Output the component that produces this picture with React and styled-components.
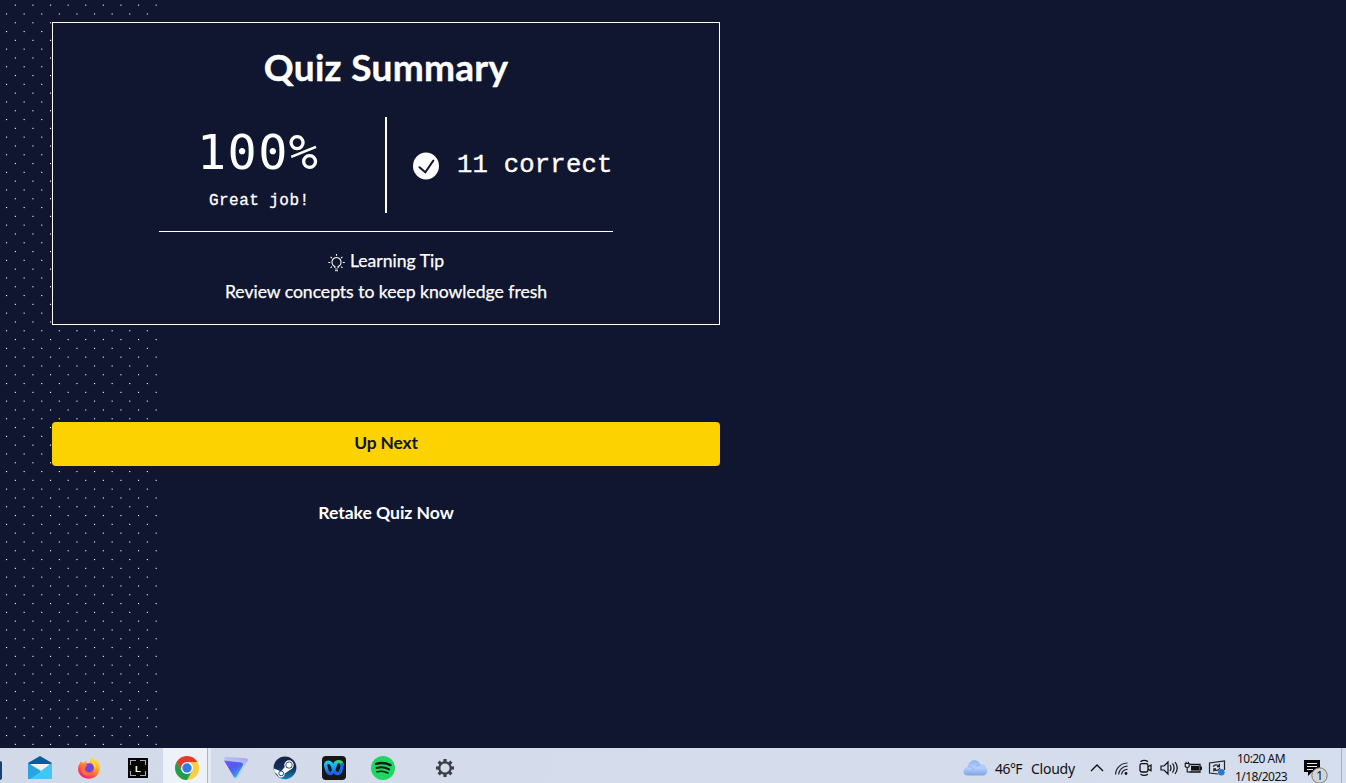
import React from "react";
import styled, { createGlobalStyle } from "styled-components";

const GlobalStyle = createGlobalStyle`
  * { box-sizing: border-box; }
  html, body { margin: 0; padding: 0; overflow: hidden; }
  body { background: #10162f; }
`;

const Screen = styled.div`
  display: flex;
  flex-direction: column;
  width: 100%;
  height: 100vh;
  background: #10162f;
  color: #fff;
  font-family: Lato, "Open Sans", sans-serif;
`;

const Page = styled.main`
  position: relative;
  flex: 1;
  min-height: 0;
  padding: 22px 0 0 52px;
`;

const DotField = styled.svg`
  position: absolute;
  left: 0;
  top: 0;
  width: 160px;
  height: 100%;
`;

const Column = styled.div`
  position: relative;
  display: flex;
  flex-direction: column;
  width: 668px;
`;

const Card = styled.section`
  display: flex;
  flex-direction: column;
  align-items: center;
  height: 303px;
  border: 1px solid #fff;
  background: #10162f;
`;

const Title = styled.h1`
  margin: 20px 0 0;
  height: 50px;
  font-size: 37px;
  line-height: 48px;
  font-weight: 700;
  letter-spacing: 0.3px;
  white-space: nowrap;
  -webkit-text-stroke: 0.4px #fff;
`;

const Results = styled.div`
  display: flex;
  width: 454px;
  height: 115px;
  margin-top: 24px;
  padding-bottom: 18px;
  border-bottom: 1px solid #fff;
  font-family: "Liberation Mono", monospace;
`;

const Score = styled.div`
  display: flex;
  flex-direction: column;
  width: 228px;
  padding-left: 38px;
  border-right: 2px solid #fff;
`;

const Percent = styled.div`
  height: 73px;
  font-family: "DejaVu Sans Mono", monospace;
  font-size: 48.5px;
  line-height: 70px;
  letter-spacing: 1.4px;
`;

const Praise = styled.div`
  padding-left: 12px;
  font-size: 16px;
  line-height: 24px;
  letter-spacing: 0.45px;
  white-space: nowrap;
  -webkit-text-stroke: 0.3px #fff;
`;

const Correct = styled.div`
  display: flex;
  align-items: center;
  gap: 18px;
  padding: 1px 0 0 26px;
  font-size: 25.6px;
  letter-spacing: 0.2px;
  white-space: nowrap;
  -webkit-text-stroke: 0.4px #fff;
  svg { flex: none; }
`;

const TipHeading = styled.div`
  display: flex;
  align-items: center;
  gap: 5px;
  height: 30px;
  margin-top: 14px;
  font-size: 17.6px;
  -webkit-text-stroke: 0.25px #fff;
  svg { margin-top: 3px; }
  span { margin-top: -1px; }
`;

const TipText = styled.p`
  margin: 0;
  font-size: 17.6px;
  line-height: 32px;
  letter-spacing: -0.03px;
  white-space: nowrap;
  -webkit-text-stroke: 0.25px #fff;
`;

const PrimaryButton = styled.button`
  height: 44px;
  margin-top: 97px;
  padding: 0 0 3px;
  border: 0;
  border-radius: 4px;
  background: #fcd200;
  color: #10162f;
  font: 700 17.4px Lato, sans-serif;
  letter-spacing: -0.15px;
`;

const TextButton = styled.button`
  align-self: center;
  height: 44px;
  margin-top: 24px;
  padding: 0;
  border: 0;
  background: transparent;
  color: #fff;
  font: 700 17.6px Lato, sans-serif;
  letter-spacing: -0.05px;
  white-space: nowrap;
`;

const Taskbar = styled.footer`
  display: flex;
  flex: none;
  height: 35px;
  background: linear-gradient(90deg, #d2d9e8, #d5dcec 50%, #d5deee);
  color: #111;
  font-family: "Noto Sans", "Open Sans", sans-serif;
`;

const HiddenApp = styled.div`
  width: 2px;
  height: 19px;
  margin: 13px 13px 0 0;
  border-radius: 0 2px 2px 0;
  background: #164273;
`;

const AppSlot = styled.div`
  display: flex;
  justify-content: center;
  width: ${(p) => p.$width || 49}px;
  padding-top: ${(p) => p.$top || 8}px;
  svg { display: block; }
`;

const ActiveApp = styled(AppSlot)`
  width: 45px;
  margin-left: 1px;
  background: #edf1f8;
  border-right: 1px solid #aeb5c2;
  padding-left: 3px;
`;

const StackedEdge = styled.div`
  width: 3px;
  background: #e3e8f1;
`;

const Tray = styled.div`
  display: flex;
  align-items: flex-start;
  margin-left: auto;
  svg { display: block; flex: none; }
`;

const Weather = styled.div`
  display: flex;
  width: 122px;
  padding-top: 10px;
  font-size: 14px;
  line-height: 21px;
  white-space: nowrap;
  svg { margin: 1px 7px 0 0; }
`;

const Temperature = styled.span`
  width: 36px;
  letter-spacing: -0.55px;
`;

const Condition = styled.span`
  letter-spacing: -0.25px;
`;

const TrayIcon = styled.div`
  display: flex;
  justify-content: center;
  width: 24px;
  padding-top: 10px;
`;

const Clock = styled.div`
  width: 66px;
  padding: 2px 2px 0 0;
  font-size: 12px;
  line-height: 18px;
  letter-spacing: -0.55px;
  text-align: center;
  white-space: nowrap;
`;

const Notifications = styled.div`
  width: 46px;
  padding: 10px 0 0 9px;
`;

const DesktopEdge = styled.div`
  width: 5px;
  height: 35px;
  border-left: 1px solid #a9b1bf;
`;

const Dots = () => (
  <DotField aria-hidden="true">
    {Array.from({ length: 86 }, (_, row) =>
      Array.from({ length: 9 }, (_, col) => (
        <rect
          key={`${row}-${col}`}
          x={(row % 2 ? 6 : 14.8) + col * 17.6}
          y={4.6 + row * 8.8}
          width="1.1"
          height="1.1"
          fill="#fff"
        />
      ))
    )}
  </DotField>
);

const CheckIcon = () => (
  <svg width="26" height="28" viewBox="0 0 26 28">
    <ellipse cx="13" cy="14" rx="13" ry="13.5" fill="#fff" />
    <path d="M6.5 15.2l5.8 5L20.3 8.6" fill="none" stroke="#10162f" strokeWidth="2" strokeLinecap="round" />
  </svg>
);

const BulbIcon = () => (
  <svg width="17" height="18" viewBox="0 0 17 18" fill="none" stroke="#fff" strokeWidth="1.1">
    <path d="M6.9 14v-1.6a4.6 4.6 0 1 1 3.2 0V14" />
    <path d="M7 15h3M7 16.6h3" opacity=".75" />
    <path d="M8.5 0v1.8M0.3 8.5h2M14.8 8.5h2M2.6 2.8l1.3 1.3M14.4 2.8l-1.3 1.3M2.6 13.9l1.3-1.2M14.4 13.9l-1.3-1.2" />
  </svg>
);

const MailIcon = () => (
  <svg width="24" height="24" viewBox="0 0 24 24">
    <path d="M0 7L12 0 24 7v5H0z" fill="#0b5c9f" />
    <path d="M2.5 8h19v8h-19z" fill="#f3f3f3" />
    <path d="M0 7l24 14V7L12 15.5z" fill="#39bff1" />
    <path d="M0 7v16h24z" fill="#29a4e2" />
    <path d="M24 7v16H2L14 15z" fill="#43c6f3" />
  </svg>
);

const FirefoxIcon = () => (
  <svg width="24" height="24" viewBox="0 0 24 24">
    <defs>
      <linearGradient id="fox" x1="0.8" y1="0" x2="0.2" y2="1">
        <stop offset="0" stopColor="#fff14a" />
        <stop offset=".45" stopColor="#ff9a22" />
        <stop offset=".75" stopColor="#ff4650" />
        <stop offset="1" stopColor="#e9198b" />
      </linearGradient>
    </defs>
    <path d="M3.3 6.8l.6-1.7 1.5 1.7 1.8-.2 2.2-2 .4 2.5 2.7.2.5-2.8L16 0l1.1 4 1.3 1 .2-2c2.8 2.4 4.6 6 4.2 10-.5 5.6-5.3 9.8-10.9 9.8C6 22.8 1 18.5 1 13c0-2.3.6-4.4 2.3-6.2z" fill="url(#fox)" />
    <circle cx="12.3" cy="11.8" r="4.6" fill="#7444d8" />
    <path d="M4.5 9c2-.7 3.7-.8 6.1.3l-1.8 1.5-1.4 2.4c.8 3.9 5.4 5.3 9.4 3.1-2 4.4-9.2 4.8-12-.3z" fill="#ff7139" />
    <path d="M13 5c3 2 4.6 4.4 4.5 8.3 2-2.2 1-6-.5-8.3l-2-3z" fill="#ffd83b" />
  </svg>
);

const LIcon = () => (
  <svg width="20" height="20" viewBox="0 0 20 20">
    <path fill="#050505" d="M0 0h20v20H0z" />
    <path d="M2.5 7V2.5H8M12 2.5h5.5V7M2.5 13v4.5H8M12 17.5h5.5V13" fill="none" stroke="#aaa" strokeWidth="1.1" />
    <text x="7.1" y="13.6" fill="#fff" fontFamily="Liberation Sans, sans-serif" fontWeight="700" fontSize="9.5">L</text>
  </svg>
);

const ChromeIcon = () => (
  <svg width="26" height="26" viewBox="0 0 26 26">
    <circle cx="13" cy="12" r="12" fill="#ffcd40" />
    <path d="M2.61 6A12 12 0 0 1 23.39 6H13L7.8 15z" fill="#e33b2e" />
    <path d="M2.61 6A12 12 0 0 0 13 24L18.2 15H7.8z" fill="#219d51" />
    <circle cx="13" cy="12" r="6" fill="#fff" />
    <circle cx="13" cy="12" r="4.7" fill="#347bea" />
  </svg>
);

const ProtonIcon = () => (
  <svg width="24" height="24" viewBox="0 0 24 24">
    <defs>
      <linearGradient id="vpn" x1="0" y1="0" x2=".7" y2="1">
        <stop stopColor="#7a58f5" /><stop offset=".5" stopColor="#4e5cf0" /><stop offset="1" stopColor="#4a9cf5" />
      </linearGradient>
      <linearGradient id="vpn2" x1=".4" y1="1" x2=".7" y2="0">
        <stop stopColor="#6fe6f8" /><stop offset=".6" stopColor="#a9dcf8" /><stop offset="1" stopColor="#b59cf5" />
      </linearGradient>
    </defs>
    <path d="M0 3Q0 1 2 1l20 1.2q3 .4 1.5 3L14 21q-1.5 2.5-3 0z" fill="url(#vpn2)" />
    <path d="M0 4.5l9.8 16.5q1.4 1.6 2.5-.4L18.6 10q1.5-3-1.6-3.6z" fill="url(#vpn)" />
  </svg>
);

const SteamIcon = () => (
  <svg width="24" height="24" viewBox="0 0 24 24">
    <defs>
      <linearGradient id="steam" x1="0" y1="0" x2="0" y2="1">
        <stop stopColor="#15203f" /><stop offset=".5" stopColor="#142e5b" /><stop offset="1" stopColor="#1386b8" />
      </linearGradient>
    </defs>
    <circle cx="12" cy="11.8" r="11.4" fill="url(#steam)" />
    <path d="M.8 12.4l7.3 3 4.8-6 5.1 3.8-6.3 4.2c.2 5.2-6.4 5.4-7.2 1.1L1.5 16z" fill="#fff" />
    <circle cx="16" cy="9" r="4.7" fill="#fff" />
    <circle cx="16" cy="9" r="3.5" fill="#173057" />
    <circle cx="16" cy="9" r="2.7" fill="#fff" />
    <circle cx="8.2" cy="17.4" r="2.4" fill="none" stroke="#1c527e" />
  </svg>
);

const WebexIcon = () => (
  <svg width="24" height="24" viewBox="0 0 24 24">
    <defs>
      <linearGradient id="webex" x1="0" y1="0" x2="0" y2="1">
        <stop stopColor="#1ec8e8" /><stop offset=".6" stopColor="#1690f5" /><stop offset="1" stopColor="#1a5ee6" />
      </linearGradient>
    </defs>
    <rect width="24" height="24" rx="4" fill="#171717" />
    <g fill="none" strokeWidth="3.4" strokeLinecap="round" strokeLinejoin="round">
      <path d="M13.2 7.4C15.4 4.6 19.6 5.2 20 8.6" stroke="#35d46a" />
      <path d="M20 8.6c.2 4.2-1.4 9-4.3 9-3 0-3.9-3.3-4.7-6.2" stroke="#1a66ea" />
      <path d="M11 11.4C10.200 8.500 8.500 6.200 6.200 6.200 4 6.200 3.500 8 3.800 10c.6 4 2.200 7.600 4.500 7.600 3.400 0 3.900-7.200 5.700-10.600" stroke="url(#webex)" />
    </g>
  </svg>
);

const SpotifyIcon = () => (
  <svg width="24" height="24" viewBox="0 0 24 24">
    <circle cx="12" cy="12" r="12" fill="#1ed760" />
    <g fill="none" stroke="#101b14" strokeLinecap="round">
      <path d="M5 7.9c5.2-1.5 10.3-.9 14.4 1.2" strokeWidth="2.4" />
      <path d="M5.5 12c4.4-1.3 8.8-.8 12.6 1.4" strokeWidth="2" />
      <path d="M6 15.8c3.9-1 7.7-.6 10.8 1.2" strokeWidth="1.7" />
    </g>
  </svg>
);

const GearIcon = () => (
  <svg width="20" height="20" viewBox="0 0 20 20" fill="none" stroke="#3c3f45">
    <circle cx="10" cy="10" r="5.7" strokeWidth="2.2" />
    {[0, 45, 90, 135, 180, 225, 270, 315].map((angle) => (
      <path key={angle} d="M10 1v3" strokeWidth="3.2" transform={`rotate(${angle} 10 10)`} />
    ))}
  </svg>
);

const CloudIcon = () => (
  <svg width="25" height="18" viewBox="0 0 25 18">
    <defs>
      <linearGradient id="cloud" x1="0" y1="0" x2="0" y2="1">
        <stop stopColor="#8db3f0" /><stop offset=".5" stopColor="#b5d0fa" /><stop offset="1" stopColor="#7ca3e6" />
      </linearGradient>
    </defs>
    <path d="M5 16.500C-1 16.500-1 9 4.600 7.900 6-.8 15.500-.6 17.300 5.600 25.700 4.200 26.300 16.500 20 16.500z" fill="url(#cloud)" />
    <path d="M4.600 7.900c3-.6 5 .6 6.400 2.700M17.300 5.600c-2 .2-3.400 1.100-4.300 2.600" fill="none" stroke="#86aceb" strokeWidth=".8" />
  </svg>
);

const ChevronIcon = () => (
  <svg width="14" height="20" viewBox="0 0 14 20">
    <path d="M1 13l6-6 6 6" fill="none" stroke="#111" strokeWidth="1.4" />
  </svg>
);

const WifiIcon = () => (
  <svg width="14" height="20" viewBox="0 0 14 20" fill="none" stroke="#222" strokeWidth="1.2">
    <path d="M1.500 16.500A12 12 0 0 1 13.500 5M4.500 16.500a9 9 0 0 1 9-8.300M7.500 16.500a6 6 0 0 1 6-5.200" />
    <circle cx="12" cy="15.500" r="1.400" fill="#111" stroke="none" />
  </svg>
);

const MeetIcon = () => (
  <svg width="14" height="20" viewBox="0 0 14 20" fill="none" stroke="#111" strokeWidth="1.3">
    <rect x="2" y="5.700" width="8" height="8.300" rx="1.800" />
    <path d="M10 8.700L13 7v5.700l-3-1.600M2.500 3.600q3.700-2.300 7.400 0M2.500 16.200q3.700 2.300 7.400 0" />
  </svg>
);

const VolumeIcon = () => (
  <svg width="18" height="20" viewBox="0 0 18 20" fill="none" stroke="#111" strokeWidth="1.2">
    <path d="M1 8h3l4-4v12l-4-4H1zM10 7q2 3 0 6M12.5 5.4q3.3 4.6 0 9.2M15 4q4.5 6 0 12" />
  </svg>
);

const BatteryIcon = () => (
  <svg width="18" height="20" viewBox="0 0 18 20">
    <path d="M6 6.5h10v7.500H5.500M17.300 8.500v3.600" fill="none" stroke="#111" strokeWidth="1.3" />
    <path d="M7 8h8v4.6H7z" fill="#111" />
    <path d="M1.2 5.5h4v3q-2 2-4 0zM2.100 5.500V3.800M4.400 5.500V3.800M3.200 9.500v4.500h3" fill="none" stroke="#111" strokeWidth="1.1" />
  </svg>
);

const UpdateIcon = () => (
  <svg width="18" height="20" viewBox="0 0 18 20">
    <path d="M10 16L1.5 15V5L16.5 3v9" fill="none" stroke="#222" strokeWidth="1.2" />
    <path d="M5 8.7q3-3.5 6.4-.4V5.8m0 2.8H9M12 10q-2.7 4-6.2 1.3v2.3m0-2.7H8" fill="none" stroke="#222" strokeWidth="1.2" />
    <circle cx="13.3" cy="14.3" r="3.3" fill="#267bc9" />
  </svg>
);

const NoticeIcon = () => (
  <svg width="26" height="25" viewBox="0 0 26 25">
    <path d="M0 2h16v12H8l-4 4v-4H0z" fill="#000" />
    <path d="M3 5.500h10M3 8.500h10M3 11.500h6" stroke="#e7edf5" strokeWidth="1" />
    <circle cx="15.5" cy="17.5" r="7.7" fill="#d2d4d6" stroke="#777" />
    <text x="12.3" y="22" fontSize="12" fontFamily="Noto Sans, sans-serif" fill="#111">1</text>
  </svg>
);

export default function App() {
  return (
    <Screen>
      <GlobalStyle />
      <Page>
        <Dots />
        <Column>
          <Card>
            <Title>Quiz Summary</Title>
            <Results>
              <Score>
                <Percent>100%</Percent>
                <Praise>Great job!</Praise>
              </Score>
              <Correct><CheckIcon /><span>11 correct</span></Correct>
            </Results>
            <TipHeading><BulbIcon /><span>Learning Tip</span></TipHeading>
            <TipText>Review concepts to keep knowledge fresh</TipText>
          </Card>
          <PrimaryButton>Up Next</PrimaryButton>
          <TextButton>Retake Quiz Now</TextButton>
        </Column>
      </Page>
      <Taskbar>
        <HiddenApp />
        <AppSlot><MailIcon /></AppSlot>
        <AppSlot><FirefoxIcon /></AppSlot>
        <AppSlot $top={10}><LIcon /></AppSlot>
        <ActiveApp><ChromeIcon /></ActiveApp>
        <StackedEdge />
        <AppSlot><ProtonIcon /></AppSlot>
        <AppSlot><SteamIcon /></AppSlot>
        <AppSlot><WebexIcon /></AppSlot>
        <AppSlot><SpotifyIcon /></AppSlot>
        <AppSlot $width={75} $top={10}><GearIcon /></AppSlot>
        <Tray>
          <Weather>
            <CloudIcon />
            <Temperature>46°F</Temperature>
            <Condition>Cloudy</Condition>
          </Weather>
          <TrayIcon><ChevronIcon /></TrayIcon>
          <TrayIcon><WifiIcon /></TrayIcon>
          <TrayIcon><MeetIcon /></TrayIcon>
          <TrayIcon><VolumeIcon /></TrayIcon>
          <TrayIcon><BatteryIcon /></TrayIcon>
          <TrayIcon><UpdateIcon /></TrayIcon>
          <Clock>10:20 AM<br />1/18/2023</Clock>
          <Notifications><NoticeIcon /></Notifications>
          <DesktopEdge />
        </Tray>
      </Taskbar>
    </Screen>
  );
}
